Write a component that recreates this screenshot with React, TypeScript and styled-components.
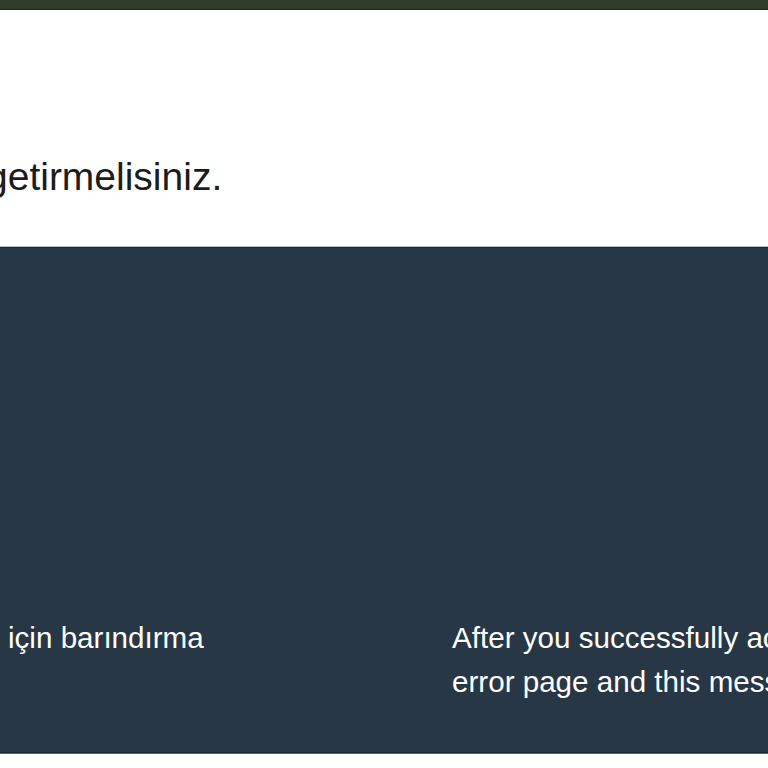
import React from "react";
import styled, { createGlobalStyle } from "styled-components";

const Global = createGlobalStyle`
  html, body { margin: 0; padding: 0; background: #ffffff; }
  body { font-family: "Liberation Sans", Arial, sans-serif; overflow: hidden; }
`;

const TopBar = styled.header`
  height: 9px;
  background: #313b2a;
  border-bottom: 1px solid #1f261a;
  box-shadow: 0 1px 0 #aab2a2;
`;

const Intro = styled.section`
  background: #ffffff;
  padding: 138px 0 41px;
  overflow: hidden;
`;

const IntroText = styled.p`
  margin: 0 0 0 -14px;
  font-size: 39px;
  line-height: 57px;
  color: #1c1c1c;
  white-space: nowrap;
`;

const Footer = styled.footer`
  background: #283746;
  border-top: 1px solid #b7c6d1;
  box-shadow: inset 0 1px 0 #1d2731, inset 0 -1px 0 #1d2731;
  padding: 369px 0 50px;
  display: grid;
  grid-template-columns: 444px 1fr;
  overflow: hidden;
  border-bottom: 1px solid #5c6372;
`;

const FooterCol = styled.div<{ $pad: number }>`
  padding-left: ${(p) => p.$pad}px;
  font-size: 29.6px;
  line-height: 43.5px;
  color: #ffffff;
  white-space: nowrap;
  overflow: hidden;
`;

export default function App() {
  return (
    <>
      <Global />
      <TopBar />
      <Intro>
        <IntroText>getirmelisiniz.</IntroText>
      </Intro>
      <Footer>
        <FooterCol $pad={8}>için barındırma</FooterCol>
        <FooterCol $pad={8}>
          After you successfully activate your account, this
          <br />
          error page and this message will disappear.
        </FooterCol>
      </Footer>
    </>
  );
}
